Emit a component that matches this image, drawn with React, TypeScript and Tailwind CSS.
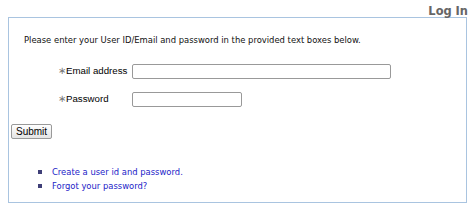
export default function App() {
  return (
    <div className="w-[474px] h-[209px] bg-white relative overflow-hidden">
      <div className="flex justify-end pr-[6px] pt-[3px] h-[17px]">
        <span className="font-['DejaVu_Sans_Condensed','DejaVu_Sans',sans-serif] font-bold text-[12.7px] leading-[15px] text-[#666]">
          Log In
        </span>
      </div>
      <div className="ml-[8px] w-[459px] h-[186px] border border-[#a9c4e0] pl-[2px]">
        <p className="pl-[13px] pt-[15px] font-['DejaVu_Sans_Condensed','DejaVu_Sans',sans-serif] text-[9.35px] leading-[14px] text-[#111]">
          Please enter your User ID/Email and password in the provided text boxes below.
        </p>
        <div className="mt-[17px] font-['Liberation_Sans',sans-serif] text-[9.7px] text-black">
          <div className="flex items-center h-[15px]">
            <span className="ml-[47px] w-[74px]">
              <span className="text-[#777]">∗</span>Email address
            </span>
            <input
              type="text"
              className="w-[259px] h-[15px] border border-[#999] rounded-[2px] bg-white"
            />
          </div>
          <div className="flex items-center h-[15px] mt-[13px]">
            <span className="ml-[47px] w-[74px]">
              <span className="text-[#777]">∗</span>Password
            </span>
            <input
              type="text"
              className="w-[110px] h-[15px] border border-[#999] rounded-[2px] bg-white"
            />
          </div>
          <button className="mt-[17px] h-[15px] px-[4px] border border-[#999] rounded-[2px] bg-gradient-to-b from-white to-[#e4e4e4] text-[10px] leading-[13px]">
            Submit
          </button>
        </div>
        <ul className="mt-[25px] ml-[27px] font-['DejaVu_Sans_Condensed','DejaVu_Sans',sans-serif] text-[9.35px] leading-[14px] text-[#2323c8]">
          <li className="flex items-center">
            <span className="w-[4px] h-[4px] bg-[#3f3f78] mr-[10px]" />
            <a href="#">Create a user id and password.</a>
          </li>
          <li className="flex items-center">
            <span className="w-[4px] h-[4px] bg-[#3f3f78] mr-[10px]" />
            <a href="#">Forgot your password?</a>
          </li>
        </ul>
      </div>
    </div>
  );
}
